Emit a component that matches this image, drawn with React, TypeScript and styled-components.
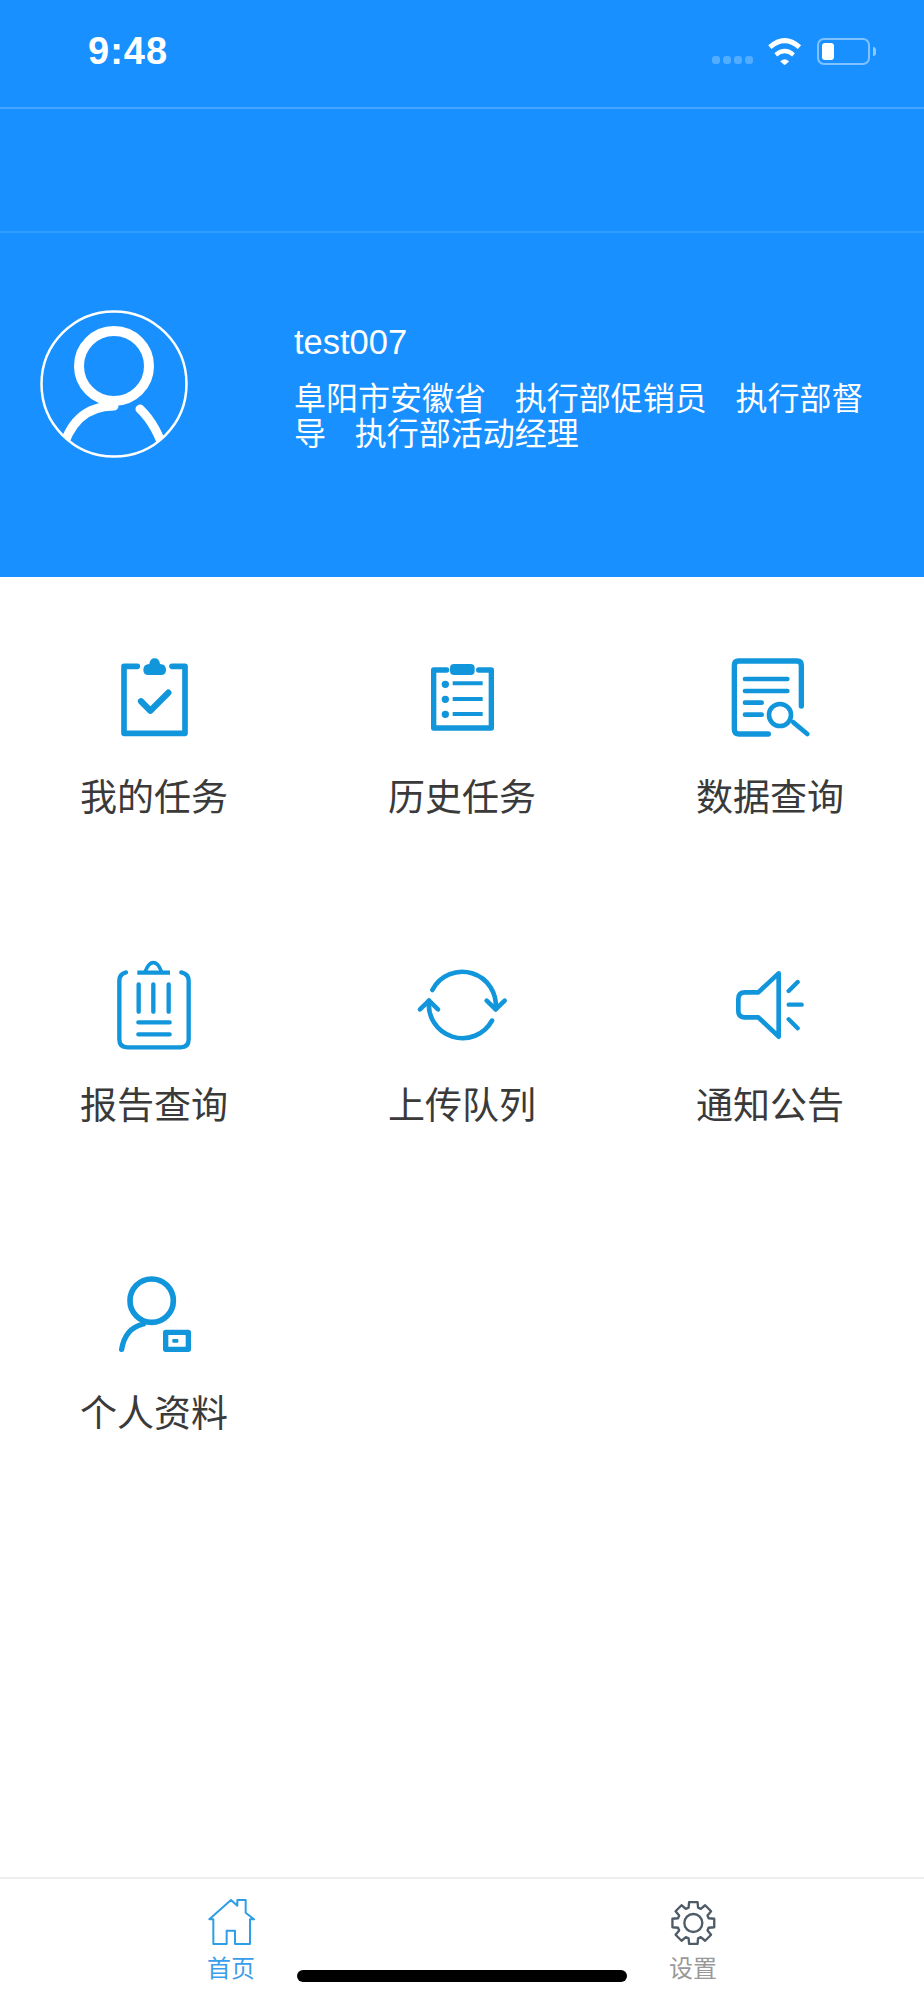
import React from 'react';
import styled, { createGlobalStyle } from 'styled-components';

const BLUE = '#1890ff';
const ICON = '#1296db';

const GlobalStyle = createGlobalStyle`
  html, body {
    margin: 0;
    padding: 0;
    background: #fff;
  }
  body {
    font-family: "Liberation Sans", "Noto Sans CJK SC", sans-serif;
  }
  * {
    box-sizing: border-box;
  }
`;

const Page = styled.div`
  position: relative;
  width: 924px;
  height: 2000px;
  display: flex;
  flex-direction: column;
  overflow: hidden;
`;

const StatusBar = styled.div`
  height: 109px;
  padding: 35px 54px 0 88px;
  display: flex;
  justify-content: space-between;
  align-items: flex-start;
  background: ${BLUE};
  border-bottom: 2px solid rgba(255, 255, 255, 0.2);
`;

const Time = styled.span`
  font-size: 38px;
  line-height: 32px;
  font-weight: 700;
  letter-spacing: 1px;
  color: #fff;
`;

const StatusIcons = styled.div`
  display: flex;
  align-items: flex-end;
  height: 28px;
  margin-top: 2px;
`;

const SignalDots = styled.div`
  display: flex;
  gap: 3px;
  margin-right: 14px;
  margin-bottom: 1px;
`;

const SignalDot = styled.span`
  width: 8px;
  height: 8px;
  border-radius: 3px;
  background: rgba(255, 255, 255, 0.25);
`;

const Battery = styled.div`
  position: relative;
  width: 53px;
  height: 27px;
  margin-left: 14px;
  padding: 3px;
  border: 2px solid rgba(255, 255, 255, 0.45);
  border-radius: 7px;

  &::after {
    content: '';
    position: absolute;
    right: -8px;
    top: 7px;
    width: 3px;
    height: 9px;
    border-radius: 0 3px 3px 0;
    background: rgba(255, 255, 255, 0.5);
  }
`;

const BatteryFill = styled.div`
  width: 12px;
  height: 100%;
  border-radius: 3px;
  background: #fff;
`;

const NavBar = styled.div`
  height: 124px;
  background: ${BLUE};
  border-bottom: 2px solid rgba(255, 255, 255, 0.1);
`;

const Profile = styled.section`
  height: 344px;
  padding: 77px 50px 0 40px;
  display: flex;
  gap: 106px;
  background: ${BLUE};
  color: #fff;
`;

const Avatar = styled.svg`
  flex: none;
  width: 148px;
  height: 148px;
`;

const ProfileText = styled.div`
  flex: 1;
  padding-top: 10px;
`;

const UserName = styled.div`
  font-size: 34.5px;
  line-height: 44px;
`;

const Roles = styled.div`
  margin-top: 18px;
  font-size: 32px;
  line-height: 35px;
  word-spacing: 0.7px;
  white-space: pre-wrap;
`;

const MenuGrid = styled.div`
  flex: 1;
  display: grid;
  grid-template-columns: repeat(3, 308px);
  grid-auto-rows: 308px;
`;

const MenuCell = styled.div`
  padding-top: 63px;
  display: flex;
  flex-direction: column;
  align-items: center;
`;

const MenuIcon = styled.svg`
  width: 120px;
  height: 110px;
  fill: none;
  stroke: ${ICON};
  stroke-linecap: round;
  stroke-linejoin: round;
`;

const MenuLabel = styled.span`
  margin-top: 27px;
  font-size: 37px;
  line-height: 44px;
  color: #3a3a3a;
`;

const TabBar = styled.nav`
  height: 123px;
  display: grid;
  grid-template-columns: 1fr 1fr;
  border-top: 2px solid #eeeeee;
`;

const TabItem = styled.div`
  padding-top: 18px;
  display: flex;
  flex-direction: column;
  align-items: center;
`;

const TabIcon = styled.svg`
  width: 60px;
  height: 50px;
  fill: none;
  stroke-width: 6;
  stroke-linejoin: round;
`;

const TabLabel = styled.span<{ $active?: boolean }>`
  margin-top: 7px;
  font-size: 24px;
  line-height: 30px;
  color: ${({ $active }) => ($active ? '#3c9eea' : '#999')};
`;

const HomeIndicator = styled.div`
  position: absolute;
  left: 297px;
  bottom: 18px;
  width: 330px;
  height: 12px;
  border-radius: 6px;
  background: #000;
`;

// gear outline with alternating tooth and root arcs
const gearPath = (cx: number, cy: number, outer: number, inner: number, teeth: number) => {
  const points: string[] = [];
  const step = (Math.PI * 2) / teeth;
  for (let i = 0; i < teeth; i++) {
    const a = -Math.PI / 2 + i * step;
    const at = (r: number, d: number) =>
      `${(cx + r * Math.cos(a + d)).toFixed(1)} ${(cy + r * Math.sin(a + d)).toFixed(1)}`;
    points.push(`${i === 0 ? 'M' : 'L'}${at(inner, -0.3)}`, `L${at(outer, -0.2)}`, `L${at(outer, 0.2)}`, `L${at(inner, 0.3)}`);
  }
  return points.join(' ') + ' Z';
};

const menuItems = [
  {
    label: '我的任务',
    viewBox: '42 0 360 330',
    icon: (
      <>
        <path d="M172 79H132V280H315V79H276" strokeWidth="17" />
        <path
          d="M190 90Q190 72 208 72Q210 55 224 55Q238 55 240 72Q258 72 258 90Q258 105 243 105H205Q190 105 190 90Z"
          fill={ICON}
          stroke="none"
        />
        <path d="M183 184L211 212L265 158" strokeWidth="19" />
      </>
    ),
  },
  {
    label: '历史任务',
    viewBox: '6 0 360 330',
    icon: (
      <>
        <path d="M140 90H101V264H274V90H236" strokeWidth="16" />
        <rect x="156" y="78" width="62" height="21" rx="6" fill={ICON} strokeWidth="12" />
        <circle cx="136" cy="133" r="8" fill={ICON} strokeWidth="6" />
        <circle cx="136" cy="178" r="8" fill={ICON} strokeWidth="6" />
        <circle cx="136" cy="223" r="8" fill={ICON} strokeWidth="6" />
        <path d="M158 130H248M158 177H248M158 222H248" strokeWidth="12" strokeLinecap="butt" />
      </>
    ),
  },
  {
    label: '数据查询',
    viewBox: '0 0 360 330',
    icon: (
      <>
        <path d="M175 282H86Q73 282 73 268V76Q73 63 86 63H261Q274 63 274 76V198" strokeWidth="16" />
        <path d="M105 117H232M105 153H232M105 188H155M105 224H155" strokeWidth="14" />
        <circle cx="210" cy="225" r="33" strokeWidth="14" />
        <path d="M250 247L292 282" strokeWidth="14" />
      </>
    ),
  },
  {
    label: '报告查询',
    viewBox: '-18 -6 360 330',
    icon: (
      <>
        <path d="M78 67Q58 72 58 92V268Q58 292 82 292H242Q266 292 266 268V92Q266 72 244 67" strokeWidth="13" />
        <path d="M112 68H210" strokeWidth="13" strokeLinecap="butt" />
        <path d="M136 64Q146 38 160 38Q174 38 184 64" strokeWidth="11" />
        <path d="M116 103V185M160 103V185M206 103V185M115 217H209M115 253H209" strokeWidth="13" />
      </>
    ),
  },
  {
    label: '上传队列',
    viewBox: '6 -6 360 330',
    icon: (
      <>
        <path d="M97 120A101 101 0 0 1 287 178" strokeWidth="14" />
        <path d="M276 212A101 101 0 0 1 87 152" strokeWidth="14" />
        <path d="M260 152L287 178L314 152M60 178L87 152L114 178" strokeWidth="14" />
      </>
    ),
  },
  {
    label: '通知公告',
    viewBox: '0 -6 360 330',
    icon: (
      <>
        <path d="M206 70L145 127H105Q85 127 85 147V182Q85 202 105 202H145L206 260Z" strokeWidth="14" />
        <path d="M236 123L263 96M236 164H275M236 208L263 235" strokeWidth="13" />
      </>
    ),
  },
  {
    label: '个人资料',
    viewBox: '-18 -12 360 330',
    icon: (
      <>
        <circle cx="155" cy="122" r="65" strokeWidth="17" />
        <path d="M65 268Q75 205 130 192" strokeWidth="16" />
        <rect x="197" y="217" width="68" height="51" strokeWidth="16" />
        <rect x="219" y="239" width="14" height="7" fill={ICON} strokeWidth="4" />
      </>
    ),
  },
];

const App: React.FC = () => {
  return (
    <Page>
      <GlobalStyle />
      <StatusBar>
        <Time>9:48</Time>
        <StatusIcons>
          <SignalDots>
            <SignalDot />
            <SignalDot />
            <SignalDot />
            <SignalDot />
          </SignalDots>
          <svg width="36" height="27" viewBox="232 50 108 82" fill="none" stroke="#fff" strokeLinecap="butt">
            <path d="M240 78Q285 38 330 78" strokeWidth="15" />
            <path d="M258 101Q285 78 312 101" strokeWidth="13" />
            <path d="M272 121Q285 110 298 121L285 132Z" fill="#fff" strokeWidth="1" />
          </svg>
          <Battery>
            <BatteryFill />
          </Battery>
        </StatusIcons>
      </StatusBar>
      <NavBar />
      <Profile>
        <Avatar viewBox="0 0 148 148" fill="none" stroke="#fff">
          <defs>
            <clipPath id="avatar-clip">
              <circle cx="74" cy="74" r="72" />
            </clipPath>
          </defs>
          <circle cx="74" cy="74" r="72.5" strokeWidth="2.5" />
          <circle cx="74" cy="56" r="35" strokeWidth="10" />
          <g clipPath="url(#avatar-clip)" strokeLinecap="round" strokeWidth="9">
            <path d="M74 96Q30 96 20 150" />
            <path d="M100 99Q118 116 127 150" />
          </g>
        </Avatar>
        <ProfileText>
          <UserName>test007</UserName>
          <Roles>{'阜阳市安徽省   执行部促销员   执行部督导   执行部活动经理'}</Roles>
        </ProfileText>
      </Profile>
      <MenuGrid>
        {menuItems.map((item) => (
          <MenuCell key={item.label}>
            <MenuIcon viewBox={item.viewBox}>{item.icon}</MenuIcon>
            <MenuLabel>{item.label}</MenuLabel>
          </MenuCell>
        ))}
      </MenuGrid>
      <TabBar>
        <TabItem>
          <TabIcon viewBox="63 81 180 150" stroke="#2e9fe6">
            <path d="M88 148L153 90L172 107V90H197V128L222 148H210V222H165V182H140V222H100V148Z" />
          </TabIcon>
          <TabLabel $active>首页</TabLabel>
        </TabItem>
        <TabItem>
          <TabIcon viewBox="69 81 180 150" stroke="#4f5b66">
            <path d={gearPath(160, 159, 64, 48, 8)} strokeWidth="7" />
            <circle cx="160" cy="159" r="27" strokeWidth="7" />
          </TabIcon>
          <TabLabel>设置</TabLabel>
        </TabItem>
      </TabBar>
      <HomeIndicator />
    </Page>
  );
};

export default App;
